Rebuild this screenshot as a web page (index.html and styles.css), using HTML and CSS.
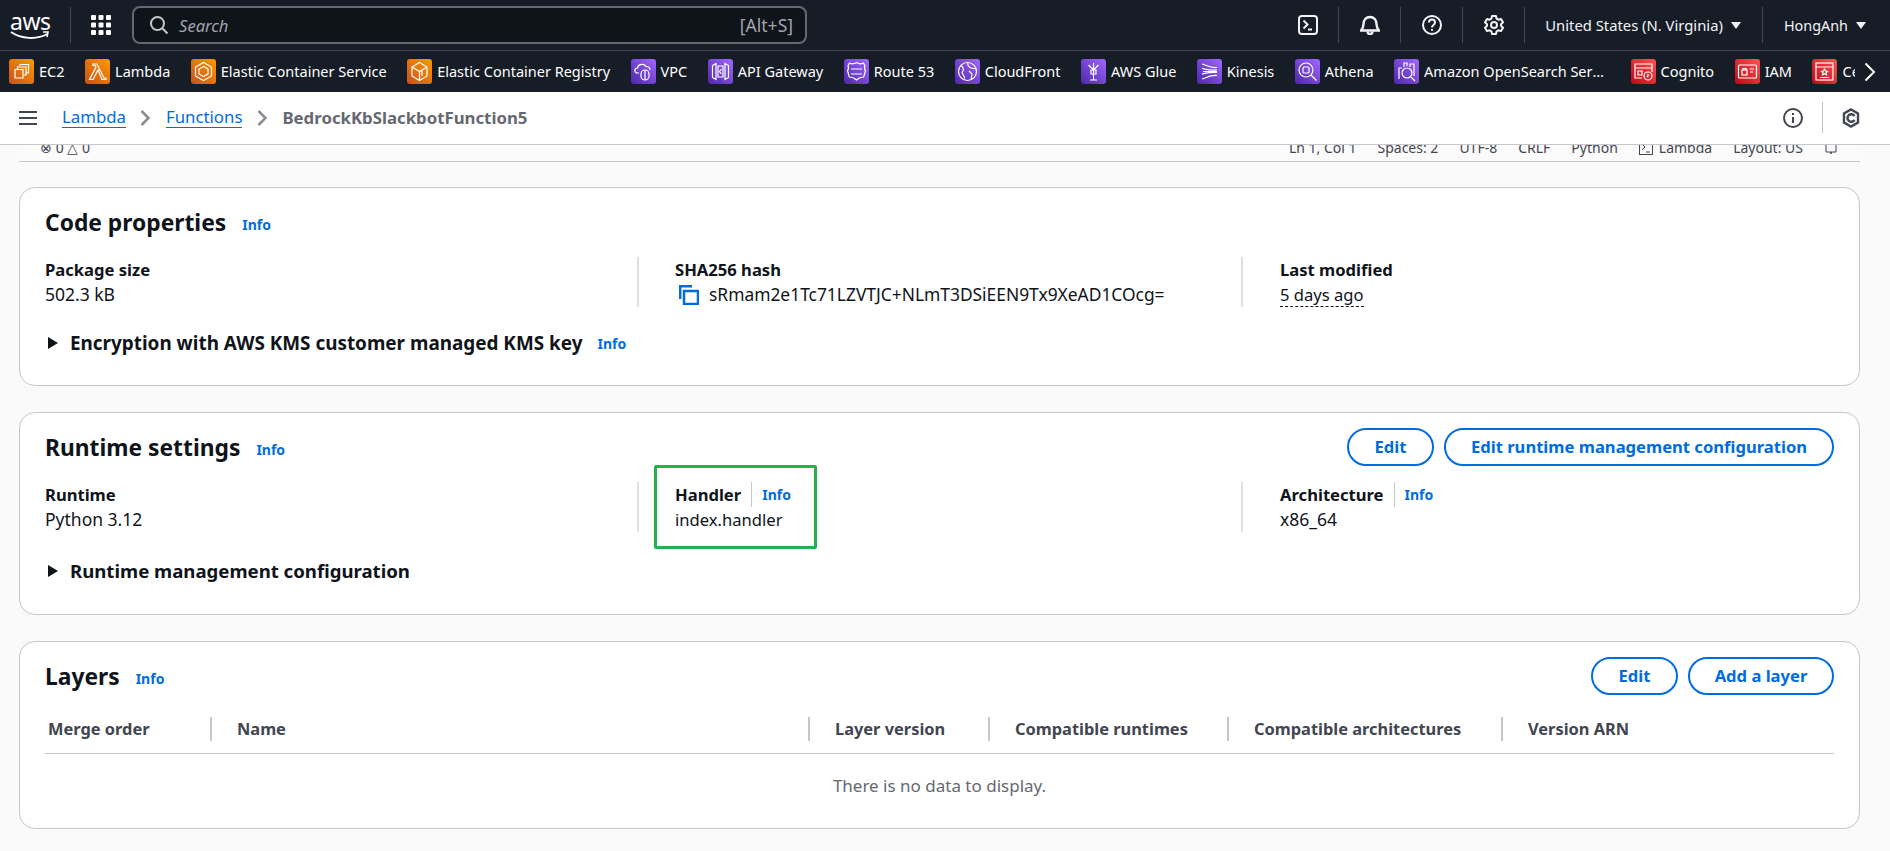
FILE: index.html
```html
<!DOCTYPE html>
<html lang="en">
<head>
  <meta charset="UTF-8" />
  <title>BedrockKbSlackbotFunction5 - Lambda</title>
  <link rel="stylesheet" href="styles.css">
</head>
<body>
  <header class="topbar">
    <div class="logo">
      <span class="logo-text">aws</span>
      <svg class="logo-smile" width="40" height="10" viewBox="0 0 40 10"><path d="M1 1c10 7 26 8 36 2" fill="none" stroke="#fff" stroke-width="2"/><path d="M33 1l5 0-1 5" fill="none" stroke="#fff" stroke-width="1.6"/></svg>
    </div>
    <span class="sep sep-logo"></span>
    <svg class="grid-icon" width="20" height="20" viewBox="0 0 20 20" fill="#fff"><rect width="5" height="5" rx="1"/><rect x="7.5" width="5" height="5" rx="1"/><rect x="15" width="5" height="5" rx="1"/><rect y="7.5" width="5" height="5" rx="1"/><rect x="7.5" y="7.5" width="5" height="5" rx="1"/><rect x="15" y="7.5" width="5" height="5" rx="1"/><rect y="15" width="5" height="5" rx="1"/><rect x="7.5" y="15" width="5" height="5" rx="1"/><rect x="15" y="15" width="5" height="5" rx="1"/></svg>
    <div class="search">
      <svg width="20" height="20" viewBox="0 0 20 20" fill="none" stroke="#c6c6cd" stroke-width="2"><circle cx="8.5" cy="8.5" r="6.5"/><path d="M13.5 13.5l5 5"/></svg>
      <span class="search-text">Search</span>
      <span class="search-key">[Alt+S]</span>
    </div>
    <div class="top-right">
      <svg class="top-icon" width="20" height="20" viewBox="0 0 20 20" fill="none" stroke="#f3f3f7" stroke-width="2"><rect x="1" y="1" width="18" height="18" rx="3"/><path d="M5.5 5.5l4 4-4 4M10 14.5h4"/></svg>
      <span class="sep"></span>
      <svg class="top-icon" width="20" height="20" viewBox="0 0 20 20" fill="none" stroke="#f3f3f7" stroke-width="2.400"><path d="M1 15.5h18c-2-2-2.500-3.500-2.500-6.500 0-4-2.500-7-6.500-7S3.500 5 3.500 9c0 3-.5 4.500-2.500 6.500z"/><path d="M7.500 16.500c0 1.500 1 2.500 2.500 2.500s2.500-1 2.500-2.500"/></svg>
      <span class="sep"></span>
      <svg class="top-icon" width="20" height="20" viewBox="0 0 20 20" fill="none" stroke="#f3f3f7" stroke-width="2"><circle cx="10" cy="10" r="9"/><path d="M7 7.500c0-2 1.500-3 3-3s3 1 3 3c0 2.500-3 2.500-3 5"/><path d="M10 14v1.800"/></svg>
      <span class="sep"></span>
      <svg class="top-icon" width="20" height="20" viewBox="0 0 20 20" fill="none" stroke="#f3f3f7" stroke-width="2"><path d="M8 1h4l.6 2.700 1.800 1 2.600-.8 2 3.400-2 1.900v1.600l2 1.900-2 3.400-2.600-.8-1.800 1L12 19H8l-.6-2.700-1.800-1-2.600.8-2-3.400 2-1.900V9.200l-2-1.900 2-3.400 2.600.8 1.800-1z" stroke-linejoin="round"/><circle cx="10" cy="10" r="3"/></svg>
      <span class="sep"></span>
      <span class="top-link">United States (N. Virginia)</span>
      <span class="caret"></span>
      <span class="sep"></span>
      <span class="top-link top-user">HongAnh</span>
      <span class="caret"></span>
    </div>
  </header>

  <nav class="favs">
    <div class="fav-list">
      <span class="fav"><span class="fav-icon orange"><svg viewBox="0 0 25 25"><path d="M11 7V5.500h8.500V14H17M6 10.500h8V19H6z"/><path d="M8.500 10.500V8H17v8h-3"/></svg></span>EC2</span>
      <span class="fav"><span class="fav-icon orange"><svg viewBox="0 0 25 25"><path d="M8 5h4l7 14h2v1.500h-4L13 11 8 20.500H4.500L11 8l-1-1.500H8z"/></svg></span>Lambda</span>
      <span class="fav"><span class="fav-icon orange"><svg viewBox="0 0 25 25"><path d="M12.500 3.500l8 4.500v9l-8 4.500-8-4.500V8z"/><path d="M12.500 7.500l4.500 2.500v5l-4.500 2.500L8 15v-5z"/></svg></span>Elastic Container Service</span>
      <span class="fav"><span class="fav-icon orange"><svg viewBox="0 0 25 25"><path d="M12.500 3.500l7.500 4.500v9l-7.500 4.500L5 17V8z"/><path d="M5 8l7.500 4.500L20 8M12.500 12.500v9M15 11v6"/></svg></span>Elastic Container Registry</span>
      <span class="fav"><span class="fav-icon purple"><svg viewBox="0 0 25 25"><path d="M8 14H6.500C3 14 3 9 6.500 9 7 5 13 4 15 7.500c2.500 0 4 1.500 4 3.500"/><rect x="10" y="11" width="8" height="10" rx="4"/><path d="M14 11v10"/></svg></span>VPC</span>
      <span class="fav"><span class="fav-icon purple"><svg viewBox="0 0 25 25"><path d="M8 4.500L4.500 6.500v12L8 20.500zM17 4.500l3.500 2v12l-3.500 2zM10 7h5v11h-5zM13.500 10l-2 2.500 2 2.500"/></svg></span>API Gateway</span>
      <span class="fav"><span class="fav-icon purple"><svg viewBox="0 0 25 25"><path d="M12.500 3.500c2 1.500 5 1.500 7 .5l1.500 3c-1 1.500-.5 3 .5 5-1.500 3-1 5-2 6-3 0-5 1-7 3-2-2-4-3-7-3-1-1-.5-3-2-6 1-2 1.500-3.500.5-5l1.500-3c2 1 5 1 7-.5z"/><path d="M7 10h11M7 15h11"/></svg></span>Route 53</span>
      <span class="fav"><span class="fav-icon purple"><svg viewBox="0 0 25 25"><circle cx="12.500" cy="12.500" r="9"/><path d="M6 6.500c3 2 3 5 1 7l3 6M13 4c-1 3 1 4 3 5s4 0 5 1M14 12l3 3-1 6"/></svg></span>CloudFront</span>
      <span class="fav"><span class="fav-icon purple"><svg viewBox="0 0 25 25"><path d="M7.500 6l5 5 5-5M12.500 4v17.500M10 11h5v4h-5zM9 21h7"/></svg></span>AWS Glue</span>
      <span class="fav"><span class="fav-icon purple"><svg viewBox="0 0 25 25"><path d="M5 5c5 1 6 4 15 3.500M5 9.500c5 1 6 2 15 1.500M5 15c5-1 6-2 15-1.500M5 20c5-1 6-4 15-3.500M6 12.500h14"/></svg></span>Kinesis</span>
      <span class="fav"><span class="fav-icon purple"><svg viewBox="0 0 25 25"><circle cx="11" cy="11" r="7"/><rect x="8" y="8" width="6" height="6" rx="1"/><path d="M16 16l5.500 5.500"/></svg></span>Athena</span>
      <span class="fav fav-long"><span class="fav-icon purple"><svg viewBox="0 0 25 25"><circle cx="13" cy="14" r="5"/><path d="M17 18l4 4M5 20V9h3M10 8V4h3v3M16 8V5h4v12"/></svg></span><span class="fav-name">Amazon OpenSearch Service</span></span>
      <span class="fav"><span class="fav-icon red"><svg viewBox="0 0 25 25"><path d="M11 19H4V5h17v8M4 9h17M7 12h4v4H7z"/><circle cx="17" cy="17" r="4"/><path d="M17 15v2l-1 1"/></svg></span>Cognito</span>
      <span class="fav"><span class="fav-icon red"><svg viewBox="0 0 25 25"><rect x="3.500" y="6" width="18" height="13" rx="1"/><rect x="7" y="11" width="5" height="5"/><path d="M8 11V9.500h3V11M15 10h4M15 13h3"/></svg></span>IAM</span>
      <span class="fav"><span class="fav-icon red"><svg viewBox="0 0 25 25"><rect x="4" y="4" width="17" height="17"/><path d="M4 8h17M12.500 10l1 2 2 .3-1.500 1.500.4 2-1.900-1-1.900 1 .4-2-1.500-1.500 2-.3zM8 18.500h9"/></svg></span>Certificate Manager</span>
    </div>
    <svg class="fav-next" width="12" height="20" viewBox="0 0 12 20" fill="none" stroke="#fff" stroke-width="2"><path d="M1.500 1.500l8.500 8.500-8.500 8.500"/></svg>
  </nav>

  <div class="crumbs">
    <svg class="menu" width="18" height="14" viewBox="0 0 18 14" fill="#424650"><rect width="18" height="2"/><rect y="6" width="18" height="2"/><rect y="12" width="18" height="2"/></svg>
    <a class="crumb-link" href="#">Lambda</a>
    <svg class="crumb-arrow" width="11" height="16" viewBox="0 0 11 16" fill="none" stroke="#8c8c94" stroke-width="2.500"><path d="M1.500 1l7 7-7 7"/></svg>
    <a class="crumb-link" href="#">Functions</a>
    <svg class="crumb-arrow" width="11" height="16" viewBox="0 0 11 16" fill="none" stroke="#8c8c94" stroke-width="2.500"><path d="M1.500 1l7 7-7 7"/></svg>
    <span class="crumb-current">BedrockKbSlackbotFunction5</span>
    <div class="crumb-tools">
      <svg width="20" height="20" viewBox="0 0 20 20" fill="none" stroke="#424650" stroke-width="2"><circle cx="10" cy="10" r="9"/><path d="M10 9v6M10 5v2"/></svg>
      <span class="crumb-sep"></span>
      <svg width="18" height="20" viewBox="0 0 18 20" fill="none" stroke="#424650" stroke-width="2.400"><path d="M9 1.500l7 4v9l-7 4-7-4v-9z"/><path d="M12.500 8A3.800 3.800 0 1 0 12.500 12"/></svg>
    </div>
  </div>

  <main class="content">
    <div class="status">
      <div class="status-row">
        <span class="status-left">&#8855; 0 &#9651; 0</span>
        <span class="status-right">
          <span>Ln 1, Col 1</span>
          <span>Spaces: 2</span>
          <span>UTF-8</span>
          <span>CRLF</span>
          <span>Python</span>
          <span class="status-lambda"><svg width="14" height="14" viewBox="0 0 14 14" fill="none" stroke="#424650"><rect x=".5" y=".5" width="13" height="13"/><path d="M3 3l3 3-3 3M7 11h4"/></svg>Lambda</span>
          <span>Layout: US</span>
          <svg width="14" height="14" viewBox="0 0 14 14" fill="none" stroke="#424650"><path d="M2 2v9h10V2M6 11l1 2 1-2"/></svg>
        </span>
      </div>
    </div>

    <section class="card card-code">
      <div class="card-head">
        <h2>Code properties</h2><a class="info info-head" href="#">Info</a>
      </div>
      <div class="cols">
        <div class="col">
          <div class="label">Package size</div>
          <div class="value num">502.3 kB</div>
        </div>
        <div class="col">
          <div class="label">SHA256 hash</div>
          <div class="value hash">
            <svg width="20" height="20" viewBox="0 0 20 20" fill="none" stroke="#006ce0" stroke-width="2.500"><path d="M13 1.200H1.200V14"/><rect x="5" y="6" width="14" height="13"/></svg>
            sRmam2e1Tc71LZVTJC+NLmT3DSiEEN9Tx9XeAD1COcg=
          </div>
        </div>
        <div class="col">
          <div class="label">Last modified</div>
          <div class="value"><span class="dotted">5 days ago</span></div>
        </div>
      </div>
      <div class="expand"><span class="tri"></span>Encryption with AWS KMS customer managed KMS key<a class="info" href="#">Info</a></div>
    </section>

    <section class="card card-runtime">
      <div class="card-head">
        <h2>Runtime settings</h2><a class="info info-head" href="#">Info</a>
        <div class="actions">
          <button class="btn btn-edit">Edit</button>
          <button class="btn btn-wide">Edit runtime management configuration</button>
        </div>
      </div>
      <div class="cols">
        <div class="col">
          <div class="label">Runtime</div>
          <div class="value num">Python 3.12</div>
        </div>
        <div class="col col-mark">
          <span class="mark"></span>
          <div class="label">Handler<a class="info info-split" href="#">Info</a></div>
          <div class="value">index.handler</div>
        </div>
        <div class="col">
          <div class="label">Architecture<a class="info info-split" href="#">Info</a></div>
          <div class="value num">x86_64</div>
        </div>
      </div>
      <div class="expand"><span class="tri"></span>Runtime management configuration</div>
    </section>

    <section class="card card-layers">
      <div class="card-head">
        <h2>Layers</h2><a class="info info-head" href="#">Info</a>
        <div class="actions">
          <button class="btn btn-edit">Edit</button>
          <button class="btn btn-layer">Add a layer</button>
        </div>
      </div>
      <div class="thead">
        <div class="th">Merge order</div>
        <div class="th">Name</div>
        <div class="th">Layer version</div>
        <div class="th">Compatible runtimes</div>
        <div class="th">Compatible architectures</div>
        <div class="th">Version ARN</div>
      </div>
      <div class="empty">There is no data to display.</div>
    </section>
  </main>
</body>
</html>
```

FILE: styles.css
```css
* {
  box-sizing: border-box;
}
html, body {
  height: 100%;
}
body {
  margin: 0;
  overflow: hidden;
  background: #fafafa;
  color: #0f141a;
  font-family: "Noto Sans", "Open Sans", sans-serif;
  font-size: 16.6px;
}
a {
  text-decoration: none;
}

/* top bar */
.topbar {
  display: flex;
  align-items: center;
  height: 51px;
  padding-left: 10px;
  background: #161d26;
  border-bottom: 1px solid #424650;
  color: #f3f3f7;
}
.logo {
  position: relative;
  width: 40px;
  height: 30px;
}
.logo-text {
  display: block;
  color: #fff;
  font-size: 23px;
  line-height: 23px;
  letter-spacing: -0.5px;
}
.logo-smile {
  position: absolute;
  left: 0;
  top: 21px;
}
.sep {
  width: 1px;
  height: 36px;
  background: #424650;
}
.sep-logo {
  margin-left: 20px;
}
.grid-icon {
  margin-left: 20px;
}
.search {
  display: flex;
  align-items: center;
  width: 675px;
  height: 38px;
  margin-left: 21px;
  padding: 0 12px 0 15px;
  background: #0f141a;
  border: 2px solid #656871;
  border-radius: 8px;
  font-size: 16.6px;
  color: #a4a4ad;
}
.search-text {
  margin-left: 10px;
  font-style: italic;
}
.search-key {
  margin-left: auto;
  font-size: 17.5px;
}
.top-right {
  display: flex;
  align-items: center;
  margin-left: auto;
  padding-right: 24px;
  font-size: 14.8px;
}
.top-icon {
  margin: 0 20px 0 21px;
}
.top-link {
  margin-left: 20px;
}
.top-user {
  margin-left: 21px;
  font-size: 14.4px;
}
.caret {
  width: 0;
  height: 0;
  margin: 0 21px 0 8px;
  border-left: 5px solid transparent;
  border-right: 5px solid transparent;
  border-top: 7px solid #f3f3f7;
}
.top-right .caret:last-child {
  margin-right: 0;
}

/* favorites */
.favs {
  position: relative;
  height: 41px;
  padding-left: 9px;
  background: #161d26;
  overflow: hidden;
}
.fav-list {
  display: flex;
  align-items: center;
  gap: 20.5px;
  width: 1846px;
  height: 41px;
  overflow: hidden;
}
.fav {
  display: flex;
  flex: none;
  align-items: center;
  gap: 5px;
  margin-bottom: 2px;
  color: #fff;
  font-size: 14.5px;
  white-space: nowrap;
}
.fav-long .fav-name {
  width: 186px;
  overflow: hidden;
  text-overflow: ellipsis;
}
.fav-icon {
  display: block;
  width: 25px;
  height: 25px;
  margin-top: 2px;
  border-radius: 3px;
}
.fav-icon svg {
  display: block;
  width: 25px;
  height: 25px;
  fill: none;
  stroke: #fff;
  stroke-width: 1.2;
}
.orange {
  background: linear-gradient(45deg, #c8511b, #ff9900);
}
.purple {
  background: linear-gradient(45deg, #4d27aa, #a166ff);
}
.red {
  background: linear-gradient(45deg, #bd0816, #ff5252);
}
.fav-next {
  position: absolute;
  right: 14px;
  top: 11px;
}

/* breadcrumbs */
.crumbs {
  display: flex;
  align-items: center;
  height: 53px;
  padding: 0 30px 1px 19px;
  background: #fff;
  border-bottom: 1px solid #c6c6cd;
  font-size: 16.8px;
}
.crumb-link {
  color: #006ce0;
  border-bottom: 1px solid #006ce0;
  line-height: 20px;
}
.menu {
  margin-right: 25px;
}
.crumb-arrow {
  margin: 0 14.5px;
}
.crumb-current {
  color: #656871;
  font-weight: 700;
}
.crumb-tools {
  display: flex;
  align-items: center;
  margin-left: auto;
}
.crumb-sep {
  width: 1px;
  height: 31px;
  margin: 0 19px;
  background: #c6c6cd;
}

/* content */
.content {
  display: flex;
  flex-direction: column;
  gap: 26px;
  padding: 0 30px 0 19px;
}
.status {
  height: 17px;
  margin-bottom: -1px;
  overflow: hidden;
  background: #fbfbfb;
  border-bottom: 1px solid #c6c6cd;
  font-size: 14px;
  color: #424650;
}
.status-row {
  display: flex;
  justify-content: space-between;
  margin-top: -9px;
  padding: 0 22px 0 21px;
  line-height: 24px;
}
.status-right {
  display: flex;
  align-items: center;
  gap: 21px;
}
.status-lambda {
  display: flex;
  align-items: center;
  gap: 6px;
}
.card {
  background: #fff;
  border: 1px solid #c6c6cd;
  border-radius: 16px;
  padding: 0 25px;
}
.card-code {
  height: 199px;
}
.card-runtime {
  height: 203px;
}
.card-layers {
  height: 188px;
}
.card-head {
  display: flex;
  align-items: center;
  height: 69px;
}
h2 {
  margin: 0;
  font-size: 22.8px;
  font-weight: 700;
}
.info {
  margin-left: 15px;
  color: #006ce0;
  font-size: 14px;
  font-weight: 700;
}
.info-head {
  margin: 4px 0 0 16px;
}
.actions {
  display: flex;
  gap: 10px;
  margin: -2px 0 0 auto;
}
.btn {
  height: 38px;
  padding: 0;
  background: #fff;
  border: 2px solid #006ce0;
  border-radius: 20px;
  color: #006ce0;
  font: 700 16.6px "Noto Sans", "Open Sans", sans-serif;
}
.btn-edit {
  width: 87px;
}
.btn-wide {
  width: 390px;
}
.btn-layer {
  width: 146px;
}
.cols {
  display: grid;
  grid-template-columns: 592px 604px 1fr;
}
.col {
  min-height: 50px;
}
.col + .col {
  padding-left: 36px;
  border-left: 2px solid #dedee3;
}
.col + .col + .col {
  padding-left: 37px;
}
.col-mark {
  position: relative;
}
.mark {
  position: absolute;
  left: 15px;
  top: -17px;
  width: 163px;
  height: 84px;
  border: 3px solid #22b14c;
  border-radius: 2px;
}
.label {
  display: flex;
  align-items: center;
  height: 25px;
  font-weight: 700;
}
.value {
  height: 25px;
  line-height: 25px;
}
.num {
  font-size: 17.5px;
}
.hash {
  display: flex;
  align-items: center;
  gap: 10px;
  padding-left: 4px;
  font-size: 17.4px;
}
.dotted {
  border-bottom: 1px dashed #0f141a;
}
.info-split {
  margin-left: 10px;
  padding-left: 10px;
  border-left: 1px solid #c6c6cd;
  line-height: 25px;
}
.expand {
  display: flex;
  align-items: center;
  margin-top: 23px;
  font-size: 18.9px;
  font-weight: 700;
}
.card-runtime .expand {
  margin-top: 26px;
  font-size: 18.6px;
}
.tri {
  width: 0;
  height: 0;
  margin: 0 12px 0 3px;
  border-top: 6px solid transparent;
  border-bottom: 6px solid transparent;
  border-left: 10px solid #0f141a;
}

/* table */
.thead {
  display: grid;
  grid-template-columns: 165px 598px 180px 239px 274px 1fr;
  margin-top: 6px;
  padding-bottom: 12px;
  border-bottom: 1px solid #c6c6cd;
}
.th {
  padding-left: 25px;
  border-left: 2px solid #c6c6cd;
  color: #424650;
  font-size: 16.4px;
  font-weight: 700;
  line-height: 24px;
}
.th:first-child {
  padding-left: 3px;
  border-left: 0;
}
.empty {
  padding-top: 20px;
  color: #656871;
  font-size: 17px;
  text-align: center;
}
```
